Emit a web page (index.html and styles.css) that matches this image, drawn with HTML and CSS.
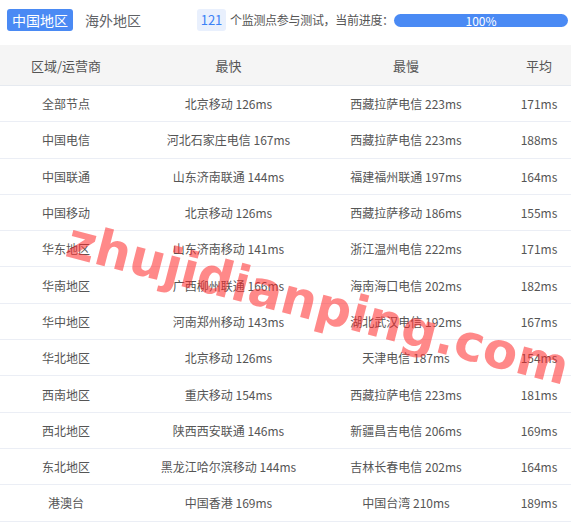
FILE: index.html
```html
<!DOCTYPE html>
<html lang="zh-CN">
<head>
<meta charset="utf-8">
<title>监测</title>
<link rel="stylesheet" href="styles.css">
</head>
<body>
<div class="page">
  <div class="toolbar">
    <span class="tab tab-active">中国地区</span>
    <span class="tab">海外地区</span>
    <span class="badge">121</span>
    <span class="info">个监测点参与测试，当前进度：</span>
    <div class="progress"><span class="progress-text">100%</span></div>
  </div>
  <table class="grid">
    <colgroup>
      <col class="c1"><col class="c2"><col class="c3"><col class="c4">
    </colgroup>
    <thead>
      <tr><th>区域/运营商</th><th>最快</th><th>最慢</th><th>平均</th></tr>
    </thead>
    <tbody>
      <tr><td>全部节点</td><td>北京移动 126ms</td><td>西藏拉萨电信 223ms</td><td>171ms</td></tr>
      <tr><td>中国电信</td><td>河北石家庄电信 167ms</td><td>西藏拉萨电信 223ms</td><td>188ms</td></tr>
      <tr><td>中国联通</td><td>山东济南联通 144ms</td><td>福建福州联通 197ms</td><td>164ms</td></tr>
      <tr><td>中国移动</td><td>北京移动 126ms</td><td>西藏拉萨移动 186ms</td><td>155ms</td></tr>
      <tr><td>华东地区</td><td>山东济南移动 141ms</td><td>浙江温州电信 222ms</td><td>171ms</td></tr>
      <tr><td>华南地区</td><td>广西柳州联通 166ms</td><td>海南海口电信 202ms</td><td>182ms</td></tr>
      <tr><td>华中地区</td><td>河南郑州移动 143ms</td><td>湖北武汉电信 192ms</td><td>167ms</td></tr>
      <tr><td>华北地区</td><td>北京移动 126ms</td><td>天津电信 187ms</td><td>154ms</td></tr>
      <tr><td>西南地区</td><td>重庆移动 154ms</td><td>西藏拉萨电信 223ms</td><td>181ms</td></tr>
      <tr><td>西北地区</td><td>陕西西安联通 146ms</td><td>新疆昌吉电信 206ms</td><td>169ms</td></tr>
      <tr><td>东北地区</td><td>黑龙江哈尔滨移动 144ms</td><td>吉林长春电信 202ms</td><td>164ms</td></tr>
      <tr><td>港澳台</td><td>中国香港 169ms</td><td>中国台湾 210ms</td><td>189ms</td></tr>
    </tbody>
  </table>
  <div class="watermark">zhujidianping.com</div>
</div>
</body>
</html>
```
FILE: styles.css
```css
html, body {
  margin: 0;
  padding: 0;
  overflow: hidden;
  background: #ffffff;
}
body {
  font-family: "Noto Sans CJK SC", "Noto Sans", sans-serif;
  color: #606266;
}
.page {
  position: relative;
  width: 571px;
  height: 525px;
  overflow: hidden;
}
.toolbar {
  display: flex;
  align-items: center;
  height: 22px;
  padding: 9px 0 0 7px;
  white-space: nowrap;
}
.tab {
  font-size: 14px;
  line-height: 22px;
  height: 22px;
  padding: 0 5px;
  border-radius: 3px;
  color: #606266;
}
.tab-active {
  background: #4a8af4;
  color: #ffffff;
  margin-right: 7px;
}
.badge {
  margin-left: 51px;
  width: 29px;
  height: 22px;
  line-height: 22px;
  text-align: center;
  font-size: 13px;
  color: #3b82f6;
  background: #e9f0fd;
  border-radius: 3px;
}
.info {
  margin-left: 4px;
  font-size: 12px;
  line-height: 22px;
  letter-spacing: -0.3px;
  color: #555;
}
.progress {
  margin-left: auto;
  margin-right: 3px;
  flex: 0 0 174px;
  height: 13px;
  border-radius: 7px;
  background: #4a8af4;
  display: flex;
  align-items: center;
  justify-content: center;
}
.progress-text {
  font-size: 12px;
  line-height: 13px;
  color: #ffffff;
}
.grid {
  margin-top: 14px;
  width: 591px;
  table-layout: fixed;
  border-collapse: collapse;
  font-size: 12px;
}
.c1 { width: 132px; }
.c2 { width: 193px; }
.c3 { width: 162px; }
.c4 { width: 104px; }
.grid th {
  background: #f5f5f5;
  font-weight: normal;
  font-size: 13px;
  color: #555;
  height: 40px;
  padding: 0;
  text-align: center;
  border-bottom: 1px solid #e6eaf0;
}
.grid td {
  height: 35.3px;
  padding: 0;
  text-align: center;
  white-space: nowrap;
  color: #555;
  border-bottom: 1px solid #ebeef5;
}
.watermark {
  position: absolute;
  left: 318px;
  top: 304px;
  transform: translate(-50%, -50%) rotate(14.5deg);
  font-family: "DejaVu Sans", sans-serif;
  font-weight: bold;
  font-size: 50px;
  line-height: 1;
  color: rgba(255, 40, 40, 0.55);
  white-space: nowrap;
  pointer-events: none;
}
```
